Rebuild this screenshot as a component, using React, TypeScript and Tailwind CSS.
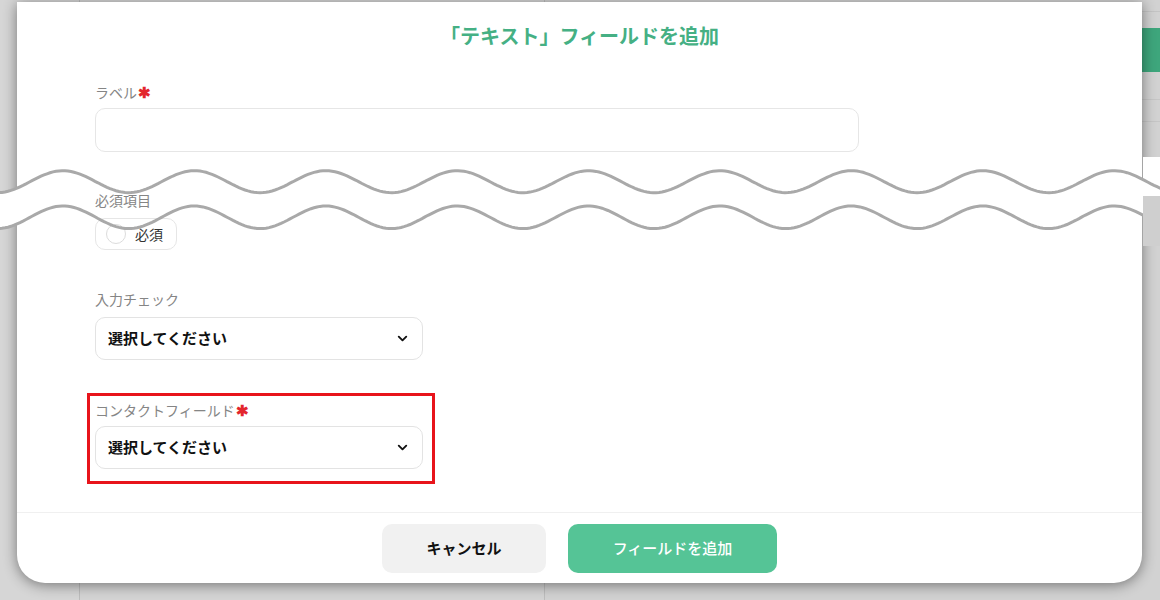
import React from "react";
import { ChevronDown } from "lucide-react";

const FONT = { fontFamily: '"Noto Sans CJK JP", "Noto Sans", sans-serif' };

function wavePoints(cy: number, amp: number): [number, number][] {
  const pts: [number, number][] = [];
  for (let x = -10; x <= 1170; x += 3) {
    const y = cy - amp * Math.cos((2 * Math.PI * (x - 63)) / 131.4);
    pts.push([x, y]);
  }
  return pts;
}

function toPath(pts: [number, number][]) {
  return pts.map((p, i) => `${i === 0 ? "M" : "L"}${p[0].toFixed(1)},${p[1].toFixed(1)}`).join(" ");
}

function Torn() {
  const top = wavePoints(181.7, 11);
  const bottom = wavePoints(217.3, 11.3);
  const fill =
    toPath(top) +
    " " +
    bottom
      .slice()
      .reverse()
      .map((p) => `L${p[0].toFixed(1)},${p[1].toFixed(1)}`)
      .join(" ") +
    " Z";
  return (
    <svg
      className="absolute left-0 top-0 pointer-events-none"
      width={1160}
      height={260}
      viewBox="0 0 1160 260"
    >
      <defs>
        <clipPath id="strips">
          <rect x={0} y={0} width={17} height={260} />
          <rect x={1142} y={0} width={18} height={260} />
        </clipPath>
      </defs>
      <rect x={1143} y={157} width={17} height={40} fill="#ffffff" />
      <path d={fill} fill="#ffffff" clipPath="url(#strips)" />
      <path d={toPath(top)} fill="none" stroke="#a9a9a9" strokeWidth={3} />
      <path d={toPath(bottom.filter((p) => p[0] <= 1147))} fill="none" stroke="#a9a9a9" strokeWidth={3} />
      <rect x={1143} y={196} width={17} height={50} fill="#cfcfcf" />
    </svg>
  );
}

function Label({ text, required }: { text: string; required?: boolean }) {
  return (
    <div className="flex items-center h-[20px] text-[14px] leading-[20px] text-[#858585]">
      <span>{text}</span>
      {required && <span className="text-[#e3262d] text-[15px] font-bold ml-[1px]">✱</span>}
    </div>
  );
}

function Select() {
  return (
    <div className="w-[328px] h-[43px] rounded-[10px] border border-[#e3e3e3] bg-white flex items-center justify-between pl-[12px] pr-[12px]">
      <span className="text-[15px] font-bold text-[#111]">選択してください</span>
      <ChevronDown size={15} strokeWidth={3} color="#111" />
    </div>
  );
}

export default function App() {
  return (
    <div className="relative w-[1160px] h-[600px] overflow-hidden bg-[#d3d3d3]" style={FONT}>
      {/* underlying page */}
      <div className="flex h-full">
        <div className="w-[80px] h-full border-r border-[#bdbdbd] bg-[#d6d6d6]" />
        <div className="w-[465px] h-full border-r border-[#bdbdbd] bg-[#d4d4d4]" />
        <div className="flex-1 h-full flex flex-col bg-[#d2d2d2]">
          <div className="h-[12px] border-b border-[#c4c4c4]" />
          <div className="flex justify-end pt-[16px]">
            <div className="w-[120px] h-[44px] bg-[#3ea67c] mr-[-10px]" />
          </div>
          <div className="h-[28px] border-b border-[#c6c6c6]" />
          <div className="h-[22px] border-b border-[#c6c6c6]" />
        </div>
      </div>

      {/* modal */}
      <div className="absolute left-[17px] top-[2px] w-[1125px] h-[581px] bg-white rounded-b-[28px] shadow-[0_2px_14px_rgba(0,0,0,0.45)] flex flex-col">
        <div className="pt-[21px] h-[47px] text-center text-[20px] leading-[26px] font-bold text-[#45b084]">
          「テキスト」フィールドを追加
        </div>
        <div className="flex-1 pl-[78px]">
          <div className="mt-[33px]">
            <Label text="ラベル" required />
          </div>
          <div className="mt-[6px] w-[764px] h-[44px] rounded-[10px] border border-[#e6e6e6]" />

          <div className="mt-[38px]">
            <Label text="必須項目" />
          </div>
          <div className="mt-[8px] w-[82px] h-[32px] rounded-[10px] border border-[#e6e6e6] flex items-center pl-[10px] gap-[9px]">
            <div className="w-[20px] h-[20px] rounded-full border border-[#dcdcdc]" />
            <span className="text-[14px] text-[#333]">必須</span>
          </div>

          <div className="mt-[39px]">
            <Label text="入力チェック" />
          </div>
          <div className="mt-[8px]">
            <Select />
          </div>

          <div className="mt-[33px] ml-[-8px] w-[348px] h-[91px] border-[3px] border-[#e8141b] pl-[5px] pt-[4px]">
            <Label text="コンタクトフィールド" required />
            <div className="mt-[6px]">
              <Select />
            </div>
          </div>
        </div>
        <div className="h-[71px] border-t border-[#f0f0f0] flex justify-center items-start pt-[11px] gap-[22px]">
          <div className="w-[164px] h-[49px] rounded-[10px] bg-[#f1f1f1] flex items-center justify-center text-[15px] font-bold text-[#111]">
            キャンセル
          </div>
          <div className="w-[209px] h-[49px] rounded-[10px] bg-[#55c496] flex items-center justify-center text-[15px] font-medium text-white">
            フィールドを追加
          </div>
        </div>
      </div>

      <Torn />
    </div>
  );
}
